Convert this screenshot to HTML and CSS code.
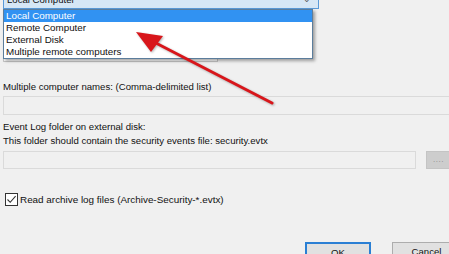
FILE: index.html
```html
<!DOCTYPE html>
<html>
<head>
<meta charset="utf-8">
<link rel="stylesheet" href="styles.css">
</head>
<body>
<div class="dialog">
  <div class="combo"><span class="combo-text">Local Computer</span><span class="combo-arrow">&#8964;</span></div>
  <div class="field field-short"></div>
  <div class="label label-multi">Multiple computer names: (Comma-delimited list)</div>
  <div class="field field-wide"></div>
  <div class="label label-event">Event Log folder on external disk:</div>
  <div class="label">This folder should contain the security events file: security.evtx</div>
  <div class="browse-row">
    <div class="field field-folder"></div>
    <div class="browse-btn">....</div>
  </div>
  <label class="check-row">
    <span class="checkbox"><svg width="11" height="11" viewBox="0 0 11 11"><path d="M1.5 5.5 L4.2 8.3 L9.6 2.2" fill="none" stroke="#333" stroke-width="1.1"/></svg></span>
    <span class="check-text">Read archive log files (Archive-Security-*.evtx)</span>
  </label>
  <div class="buttons">
    <div class="btn btn-ok">OK</div>
    <div class="btn btn-cancel">Cancel</div>
  </div>
</div>
<ul class="dropdown">
  <li class="sel">Local Computer</li>
  <li>Remote Computer</li>
  <li>External Disk</li>
  <li>Multiple remote computers</li>
</ul>
<svg class="arrow" width="449" height="254" viewBox="0 0 449 254">
  <line x1="152" y1="41" x2="272" y2="103" stroke="#d8161b" stroke-width="3" stroke-linecap="round"/>
  <polygon points="136,32 163,36 151,52" fill="#d8161b"/>
</svg>
</body>
</html>
```
FILE: styles.css
```css
html, body {
  margin: 0;
  padding: 0;
  background: #f0f0f0;
  overflow: hidden;
  width: 449px;
  height: 254px;
}
body {
  position: relative;
  font-family: "Liberation Sans", Arial, sans-serif;
  font-size: 9.6px;
  color: #111;
}
.dialog {
  display: flex;
  flex-direction: column;
  padding-left: 3px;
}
.combo {
  margin-top: -11px;
  height: 18px;
  width: 308px;
  background: #d6e7f6;
  border: 1px solid #5a9ad8;
  display: flex;
  align-items: center;
  justify-content: space-between;
  padding: 0 3px;
  box-sizing: content-box;
}
.combo-arrow {
  font-size: 9px;
  color: #555;
  margin-right: 4px;
}
.field {
  background: #f0f0f0;
  border: 1px solid #dadada;
  box-sizing: border-box;
  flex-shrink: 0;
}
.field-short {
  margin-top: 34px;
  width: 215px;
  height: 19px;
  background: #fff;
  border-color: #c8c8c8;
}
.label {
  line-height: 14px;
  height: 14px;
  white-space: nowrap;
}
.label-multi {
  margin-top: 18px;
}
.field-wide {
  margin-top: 2px;
  width: 460px;
  height: 19px;
}
.label-event {
  margin-top: 5px;
}
.browse-row {
  margin-top: 3px;
  display: flex;
  gap: 10px;
}
.field-folder {
  width: 413px;
  height: 18px;
}
.browse-btn {
  flex-shrink: 0;
  width: 40px;
  height: 18px;
  background: #cdcdcd;
  border: 1px solid #c4c4c4;
  box-sizing: border-box;
  color: #8a8a8a;
  font-size: 8px;
  line-height: 16px;
  padding-left: 6px;
  letter-spacing: 0.5px;
}
.check-row {
  margin-top: 24px;
  margin-left: 2px;
  display: flex;
  align-items: center;
  gap: 2px;
  height: 13px;
}
.check-text {
  font-size: 9.9px;
}
.checkbox {
  width: 13px;
  height: 13px;
  border: 1px solid #333;
  background: #fff;
  box-sizing: border-box;
  display: flex;
  align-items: center;
  justify-content: center;
  flex-shrink: 0;
}
.buttons {
  margin-top: 36px;
  display: flex;
  justify-content: flex-end;
  gap: 21px;
  margin-right: -12px;
}
.btn {
  width: 66px;
  height: 22px;
  box-sizing: border-box;
  background: #e1e1e1;
  border: 1px solid #adadad;
  text-align: center;
  line-height: 18px;
  flex-shrink: 0;
}
.btn-ok {
  border: 2px solid #2a7fd4;
}
.btn-cancel {
  width: 69px;
}
.dropdown {
  position: absolute;
  left: 3px;
  top: 9px;
  width: 310px;
  margin: 0;
  padding: 0;
  list-style: none;
  background: #fff;
  border: 1px solid #5b7d9c;
  box-shadow: 2px 2px 3px rgba(0,0,0,0.35);
  box-sizing: border-box;
}
.dropdown li {
  height: 12px;
  line-height: 12px;
  padding-left: 2px;
  font-size: 9.8px;
}
.dropdown li.sel {
  background: #3192f2;
  color: #fff;
}
.arrow {
  position: absolute;
  left: 0;
  top: 0;
  pointer-events: none;
  filter: drop-shadow(1px 1px 1px rgba(0,0,0,0.3));
}
```
